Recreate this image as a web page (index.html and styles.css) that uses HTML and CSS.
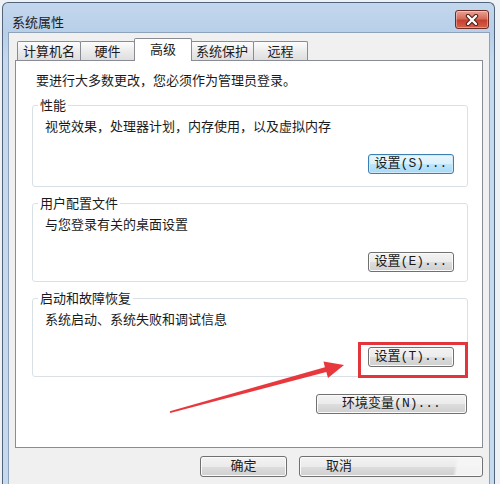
FILE: index.html
```html
<!DOCTYPE html>
<html lang="zh-CN">
<head>
    <meta charset="UTF-8">
    <title>系统属性</title>
    <link rel="stylesheet" href="styles.css">
</head>
<body>
    <div class="window">
        <div class="titlebar">
            <span class="title">系统属性</span>
            <span class="close">
                <svg width="14" height="12" viewBox="0 0 14 12">
                    <path d="M3 2 L11 10 M11 2 L3 10" stroke="#4a2019" stroke-width="4.4" stroke-linecap="round"/>
                    <path d="M3 2 L11 10 M11 2 L3 10" stroke="#fff" stroke-width="2.4" stroke-linecap="round"/>
                </svg>
            </span>
        </div>
        <div class="client">
            <div class="tabs">
                <span class="tab">计算机名</span>
                <span class="tab">硬件</span>
                <span class="tab active">高级</span>
                <span class="tab">系统保护</span>
                <span class="tab">远程</span>
            </div>
            <div class="panel">
                <p class="note">要进行大多数更改，您必须作为管理员登录。</p>

                <fieldset class="group perf">
                    <legend>性能</legend>
                    <p>视觉效果，处理器计划，内存使用，以及虚拟内存</p>
                    <div class="actions"><button class="btn focus">设置(S)...</button></div>
                </fieldset>

                <fieldset class="group">
                    <legend>用户配置文件</legend>
                    <p>与您登录有关的桌面设置</p>
                    <div class="actions"><button class="btn">设置(E)...</button></div>
                </fieldset>

                <fieldset class="group">
                    <legend>启动和故障恢复</legend>
                    <p>系统启动、系统失败和调试信息</p>
                    <div class="actions"><button class="btn">设置(T)...</button></div>
                </fieldset>

                <div class="env"><button class="btn wide">环境变量(N)...</button></div>
            </div>
            <div class="footer">
                <button class="btn">确定</button>
                <button class="btn cancel">取消</button>
            </div>
        </div>
    </div>

    <!-- annotation drawn over the dialog -->
    <div class="mark"></div>
    <svg class="arrow" width="500" height="484" viewBox="0 0 500 484">
        <polygon fill="#e8383d" points="169.8,411.3 324.9,367.3 323.5,361.5 344,365 328,378 326.3,372.1 170.2,412.9"/>
    </svg>
</body>
</html>
```

FILE: styles.css
```css
body {
    margin: 0;
    background-color: #eef2f7;
    font-family: "Noto Sans CJK SC", sans-serif;
    font-size: 13px;
    color: #1a1a1a;
    overflow: hidden;
}
.window {
    margin: 2px 0 0 2px;
    width: 491px;
    height: 482px;
    border: 1px solid #52647a;
    border-bottom: none;
    border-radius: 6px 6px 0 0;
    background: linear-gradient(#c3d7ed, #b8cfe9 30px, #c6daef 60px, #c6daef);
    display: flex;
    flex-direction: column;
    overflow: hidden;
}
.titlebar {
    height: 29px;
    display: flex;
    justify-content: space-between;
    align-items: flex-start;
    padding: 0 5px 0 9px;
}
.title {
    padding-top: 11px;
    line-height: 16px;
    color: #1b1b1b;
}
.close {
    margin-top: 7px;
    width: 34px;
    height: 19px;
    box-sizing: border-box;
    border: 1px solid #6e2b22;
    border-radius: 3px;
    background: linear-gradient(#e9a395, #d66c5a 45%, #c5412d 55%, #d4624d);
    box-shadow: inset 0 0 0 1px rgba(255, 255, 255, 0.35);
    display: flex;
    align-items: center;
    justify-content: center;
}
.client {
    flex: 1;
    margin: 0 4px 0 5px;
    padding: 5px 6px 0 6px;
    background-color: #f0f0f0;
    border: 1px solid #8ea2ba;
    border-bottom: none;
}
.tabs {
    display: flex;
    align-items: flex-end;
    height: 23px;
    padding-left: 2px;
    margin-bottom: -1px;
    position: relative;
    z-index: 1;
}
.tab {
    box-sizing: border-box;
    min-width: 55px;
    height: 19px;
    padding: 0 5px;
    margin-bottom: 1px;
    margin-left: -1px;
    border: 1px solid #898c95;
    border-bottom: none;
    border-radius: 2px 2px 0 0;
    background: linear-gradient(#fdfdfd, #ececec 50%, #dedede);
    text-align: center;
    line-height: 18px;
}
.tab:first-child {
    margin-left: 0;
}
.tab.active {
    height: 23px;
    min-width: 58px;
    margin: 0 -1px 0 -1px;
    padding: 0 2px;
    background: #fff;
    line-height: 19px;
    position: relative;
    z-index: 2;
}
.panel {
    height: 388px;
    box-sizing: border-box;
    padding: 11px 14px 0 16px;
    background: #fff;
    border: 1px solid #898c95;
}
.note {
    margin: 0;
    padding-left: 4px;
    line-height: 16px;
}
.group {
    margin: 8px 0 0 0;
    padding: 0 13px 9px 12px;
    border: 1px solid #d9e1e7;
    border-radius: 3px;
}
.perf {
    margin-top: 9px;
    padding-bottom: 12px;
}
.group legend {
    margin-left: -7px;
    padding: 0 2px;
    line-height: 16px;
}
.group p {
    margin: 5px 0 0 0;
    line-height: 16px;
}
.actions {
    margin-top: 20px;
    display: flex;
    justify-content: flex-end;
}
.btn {
    height: 20px;
    width: 86px;
    padding: 0;
    border: 1px solid #707070;
    border-radius: 3px;
    background: linear-gradient(#f3f3f3, #ebebeb 50%, #dddddd 51%, #cfcfcf);
    box-shadow: inset 0 0 0 1px #fbfbfb;
    font-family: "Liberation Mono", "Noto Sans CJK SC", monospace;
    font-size: 13px;
    line-height: 18px;
    color: #1a1a1a;
}
.btn.focus {
    border-color: #3c7fb1;
    background: linear-gradient(#eaf6fd, #d9f0fc 50%, #bee6fd 51%, #a7d9f5);
    box-shadow: inset 0 0 0 1px #cfe9f8;
}
.env {
    margin-top: 17px;
    padding-right: 1px;
    display: flex;
    justify-content: flex-end;
}
.btn.wide {
    width: 151px;
}
.footer {
    padding-top: 8px;
    display: flex;
    justify-content: flex-end;
    gap: 12px;
}
.footer .btn {
    width: 87px;
    height: 21px;
}
.footer .btn.cancel {
    width: 184px;
    text-align: left;
    padding-left: 26px;
    background: linear-gradient(100deg, rgba(255,255,255,0) 84%, rgba(246,246,246,0.9) 86%),
                linear-gradient(#f3f3f3, #ebebeb 50%, #dddddd 51%, #cfcfcf);
}
.mark {
    position: absolute;
    left: 358px;
    top: 342px;
    width: 110px;
    height: 36px;
    box-sizing: border-box;
    border: 3px solid #e3363c;
}
.arrow {
    position: absolute;
    left: 0;
    top: 0;
    pointer-events: none;
}
```
